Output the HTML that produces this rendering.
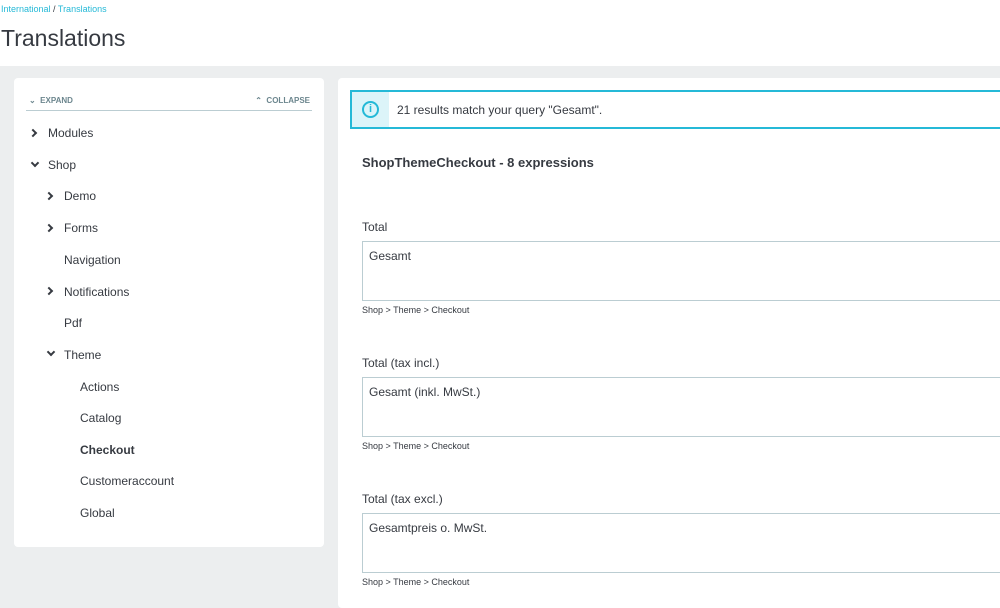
<!DOCTYPE html>
<html><head><style>
*{box-sizing:border-box;margin:0;padding:0}
body{width:1000px;height:595px;overflow:hidden;background:#eceeef;font-family:"Liberation Sans",sans-serif;color:#363a41;position:relative}
.hdr{position:absolute;left:0;top:0;width:1000px;height:66px;background:#fff}
.bc{position:absolute;left:1px;top:4px;font-size:9px;color:#25b9d7}
.bc span{color:#363a41}
h1{position:absolute;left:1px;top:25px;font-size:23px;font-weight:normal;color:#363a41}
.lc{position:absolute;left:14px;top:78px;width:310px;height:469px;background:#fff;border-radius:4px}
.eb{position:absolute;left:12px;top:16px;width:286px;height:17px;border-bottom:1px solid #bbcdd2;font-size:8px;font-weight:bold;color:#6c868e}
.t{position:absolute;font-size:12px;color:#363a41}
.ch{position:absolute;width:6px;height:6px;border-right:2px solid #363a41;border-bottom:2px solid #363a41}
.rc{position:absolute;left:338px;top:78px;width:670px;height:530px;background:#fff;border-radius:4px}
.info{position:absolute;left:12px;top:12px;width:660px;height:39px;border:2px solid #25b9d7;background:#fff}
.ic{position:absolute;left:0;top:0;width:37px;height:35px;background:#dcf4f9}
.ic div{position:absolute;left:10px;top:9px;width:17px;height:17px;border:2px solid #25b9d7;border-radius:50%;color:#25b9d7;font-size:11px;font-weight:bold;text-align:center;line-height:13px}
.lab{position:absolute;left:24px;font-size:12px}
.ta{position:absolute;left:24px;width:660px;height:60px;border:1px solid #bbcdd2;padding:7px 6px;font-size:12px}
.pth{position:absolute;left:24px;font-size:9px}
</style></head><body>
<div class="hdr"></div>
<div class="bc">International <span>/</span> Translations</div>
<h1>Translations</h1>
<div class="lc">
 <div class="eb"><span style="position:absolute;left:3px;top:2px">&#8964;&nbsp; EXPAND</span><span style="position:absolute;right:2px;top:2px">&#8963;&nbsp; COLLAPSE</span></div>
 <div class="ch" style="left:16px;top:52px;transform:rotate(-45deg)"></div><div class="t" style="left:34px;top:48px">Modules</div>
 <div class="ch" style="left:18px;top:82px;transform:rotate(45deg)"></div><div class="t" style="left:34px;top:80px">Shop</div>
 <div class="ch" style="left:32px;top:115px;transform:rotate(-45deg)"></div><div class="t" style="left:50px;top:111px">Demo</div>
 <div class="ch" style="left:32px;top:147px;transform:rotate(-45deg)"></div><div class="t" style="left:50px;top:143px">Forms</div>
 <div class="t" style="left:50px;top:175px">Navigation</div>
 <div class="ch" style="left:32px;top:210px;transform:rotate(-45deg)"></div><div class="t" style="left:50px;top:207px">Notifications</div>
 <div class="t" style="left:50px;top:238px">Pdf</div>
 <div class="ch" style="left:34px;top:271px;transform:rotate(45deg)"></div><div class="t" style="left:50px;top:270px">Theme</div>
 <div class="t" style="left:66px;top:302px">Actions</div>
 <div class="t" style="left:66px;top:333px">Catalog</div>
 <div class="t" style="left:66px;top:365px;font-weight:bold">Checkout</div>
 <div class="t" style="left:66px;top:396px">Customeraccount</div>
 <div class="t" style="left:66px;top:428px">Global</div>
</div>
<div class="rc">
 <div class="info"><div class="ic"><div>i</div></div><span style="position:absolute;left:45px;top:11px;font-size:12px">21 results match your query "Gesamt".</span></div>
 <div style="position:absolute;left:24px;top:77px;font-size:13px;font-weight:bold">ShopThemeCheckout - 8 expressions</div>
 <div class="lab" style="top:142px">Total</div>
 <div class="ta" style="top:163px">Gesamt</div>
 <div class="pth" style="top:227px">Shop &gt; Theme &gt; Checkout</div>
 <div class="lab" style="top:278px">Total (tax incl.)</div>
 <div class="ta" style="top:299px">Gesamt (inkl. MwSt.)</div>
 <div class="pth" style="top:363px">Shop &gt; Theme &gt; Checkout</div>
 <div class="lab" style="top:414px">Total (tax excl.)</div>
 <div class="ta" style="top:435px">Gesamtpreis o. MwSt.</div>
 <div class="pth" style="top:499px">Shop &gt; Theme &gt; Checkout</div>
</div>
</body></html>
